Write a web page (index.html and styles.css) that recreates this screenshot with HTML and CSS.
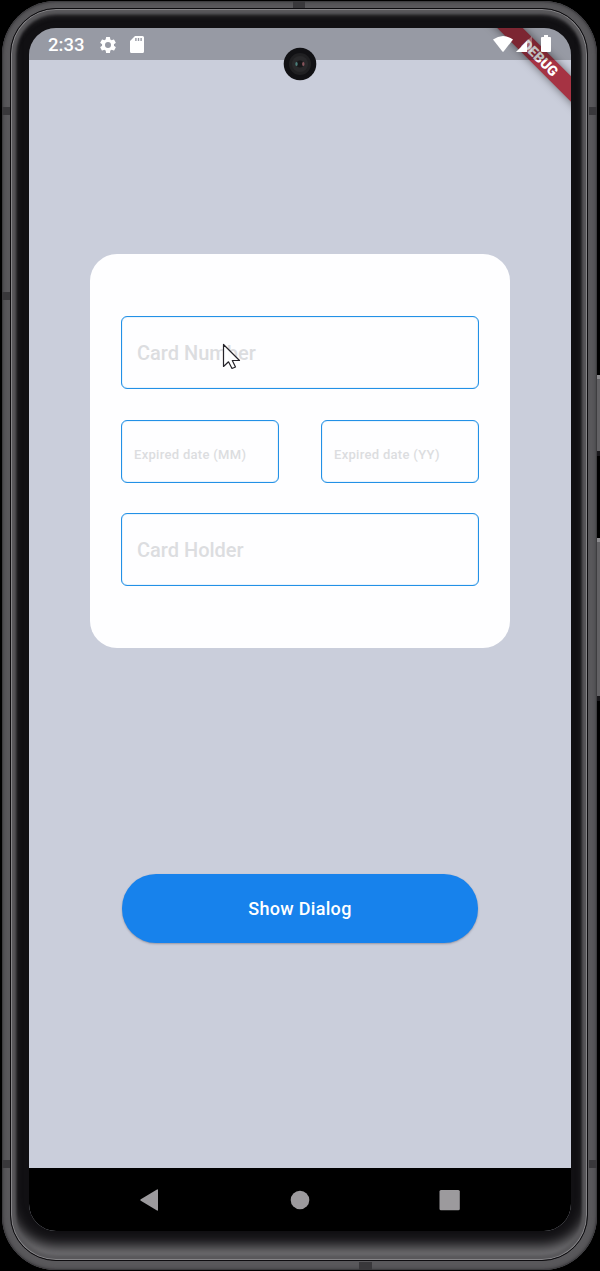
FILE: index.html
```html
<!DOCTYPE html>
<html lang="en">
<head>
<meta charset="utf-8">
<title>Card form</title>
<link rel="stylesheet" href="styles.css">
</head>
<body>
<div class="phone">
  <i class="key key-power"></i>
  <i class="key key-volume"></i>
  <div class="rim">
    <i class="seam seam-top"></i><i class="seam seam-bottom"></i>
    <i class="seam seam-side l1"></i><i class="seam seam-side l2"></i><i class="seam seam-side l3"></i>
    <i class="seam seam-side r1"></i><i class="seam seam-side r3"></i>
    <div class="bezel">
      <div class="screen">
        <div class="ribbon"><span>DEBUG</span></div>
        <header class="status">
          <span class="time">2:33</span>
          <svg class="gear" viewBox="0 0 24 24"><path d="M19.14 12.94c.04-.3.06-.61.06-.94 0-.32-.02-.64-.07-.94l2.03-1.58a.49.49 0 0 0 .12-.61l-1.92-3.32a.49.49 0 0 0-.59-.22l-2.39.96a7 7 0 0 0-1.62-.94L14.4 2.81A.48.48 0 0 0 13.92 2.4h-3.84a.47.47 0 0 0-.47.41L9.25 5.35c-.59.24-1.13.57-1.62.94l-2.39-.96a.48.48 0 0 0-.59.22L2.74 8.87a.47.47 0 0 0 .12.61l2.03 1.58a7 7 0 0 0 0 1.88l-2.03 1.58a.49.49 0 0 0-.12.61l1.92 3.32c.12.22.37.29.59.22l2.39-.96c.5.38 1.03.7 1.62.94l.36 2.54c.05.24.24.41.48.41h3.84c.24 0 .44-.17.47-.41l.36-2.54a7 7 0 0 0 1.62-.94l2.39.96c.22.08.47 0 .59-.22l1.92-3.32a.47.47 0 0 0-.12-.61zM12 15.6a3.6 3.6 0 1 1 0-7.2 3.6 3.6 0 0 1 0 7.2z"/></svg>
          <svg class="sd" viewBox="0 0 14 17"><path fill-rule="evenodd" d="M5 0h7.5A1.5 1.5 0 0 1 14 1.500V15.500A1.500 1.500 0 0 1 12.500 17H1.500A1.500 1.500 0 0 1 0 15.500V5zM5.200 2v3h1.400V2zM7.800 2v3h1.400V2zM10.400 2v3h1.400V2z"/></svg>
          <svg class="wifi" viewBox="0 0 20 16"><path d="M0 3.500Q10-3.500 20 3.500L10.600 15.500Q10 16 9.400 15.500Z"/></svg>
          <svg class="signal" viewBox="0 0 16 16"><path opacity=".3" d="M16 0V16H0Z"/><path d="M11 5V16H0Z"/></svg>
          <svg class="battery" viewBox="0 0 10 17"><path d="M3 0h4v2h2q1 0 1 1v13q0 1-1 1H1q-1 0-1-1V3q0-1 1-1h2z"/></svg>
        </header>
        <svg class="camera" viewBox="0 0 34 34"><circle cx="17" cy="17" r="16.300" fill="#111114"/><circle cx="17" cy="17" r="11" fill="#202022"/><circle cx="17" cy="17" r="8" fill="#29292b"/><circle cx="17" cy="17" r="3.500" fill="#171719"/><ellipse cx="13.500" cy="17" rx="1.200" ry="2" fill="#4c7d79"/><ellipse cx="20.300" cy="17" rx="1.200" ry="2" fill="#87555c"/></svg>
        <main class="content">
          <form class="card">
            <div class="field">Card Number</div>
            <div class="dates">
              <div class="field small">Expired date (MM)</div>
              <div class="field small">Expired date (YY)</div>
            </div>
            <div class="field">Card Holder</div>
          </form>
          <button class="show" type="button">Show Dialog</button>
        </main>
        <svg class="pointer" viewBox="0 0 20 28"><path d="M1.500 1.500V23.500L6.500 18.800 10 25.500 13.500 24 10.300 17.500H17.500Z" fill="#fff" fill-opacity=".9" stroke="#252329" stroke-width="1.200" stroke-linejoin="round"/></svg>
        <nav class="nav">
          <svg viewBox="0 0 24 24"><path d="M2.800 11.200 19 1.500q1-.6 1 .5v20q0 1-1 .5L2.800 12.800q-1.300-.8 0-1.600Z"/></svg>
          <svg viewBox="0 0 24 24"><circle cx="12" cy="12" r="9.300"/></svg>
          <svg viewBox="0 0 24 24"><rect x="1.500" y="2" width="20.300" height="20.300" rx="1.500"/></svg>
        </nav>
      </div>
    </div>
  </div>
</div>
</body>
</html>
```
FILE: styles.css
```css
* { box-sizing: border-box; }
body { margin: 0; background: #000; font-family: Roboto, sans-serif; }
.phone { position: relative; width: 600px; height: 1271px; padding: 1px 3px 1px 2px; overflow: hidden; }
.rim {
  position: relative; height: 100%; padding: 7px 9px 9px 8px; border-radius: 54px;
  background: #59585b;
  box-shadow: inset 0 0 0 1px #3e3d40, inset 0 0 3px 2px #48474a;
}
.bezel {
  position: relative; height: 100%; padding: 19px 14px 28px 18px;
  border: 1px solid #0d0c0f; border-radius: 46px;
  background: #111013;
  box-shadow: inset 0 0 0 1px #858487, inset 0 0 3px 5px #59585b, inset 0 5px 6px 0 #4c4b4e, inset 0 -17px 13px -3px #747376;
}
.screen {
  position: relative; display: flex; flex-direction: column;
  width: 542px; height: 1203px; border-radius: 27px; overflow: hidden;
  background: #cacedb;
}
.status {
  position: relative; flex: none; display: flex; align-items: center;
  height: 32px; padding: 1px 20px 0 19px; color: #fff;
  background: rgba(0, 0, 0, .25);
}
.status svg { fill: #fff; }
.time { font-size: 18.500px; font-weight: 500; width: 49px; }
.gear { width: 20px; height: 20px; margin-left: 1px; }
.sd { width: 14px; height: 17px; margin-left: 12px; }
.wifi { width: 20px; height: 16px; margin-left: auto; margin-top: -2px; }
.signal { width: 16px; height: 16px; margin: -1px 9px 0 3px; }
.battery { width: 10px; height: 17px; margin-top: -2px; }
.ribbon {
  position: absolute; left: 411px; top: 21px; width: 200px; height: 18px;
  display: flex; align-items: center; justify-content: center;
  transform: rotate(45deg);
  background: #a63343; color: #fff; font-size: 14px; font-weight: 900;
  box-shadow: 0 0 8px rgba(0, 0, 0, .5);
}
.camera { position: absolute; left: 254px; top: 19px; width: 34px; height: 34px; }
.content { flex: 1; display: flex; flex-direction: column; align-items: center; padding-top: 194px; }
.card {
  width: 420px; height: 394px; padding: 62px 31px; border-radius: 27px; background: #fefeff;
  display: flex; flex-direction: column; justify-content: space-between;
}
.field {
  height: 73px; padding: 0 15px; border: 1px solid #2391e6; border-radius: 6px;
  box-shadow: inset 0 0 1px #3a9de6;
  display: flex; align-items: center;
  color: #dcdde0; font-size: 20px; font-weight: 500;
}
.dates { display: grid; grid-template-columns: 158px 158px; justify-content: space-between; }
.field.small { height: 63px; padding: 6px 12px 0; font-size: 13px; letter-spacing: .3px; }
.show {
  width: 356px; height: 69px; margin-top: 226px; border: 0; border-radius: 34px;
  background: #1782ec; color: #fff; font: 500 18px Roboto, sans-serif; letter-spacing: .3px;
  box-shadow: 0 1px 2px rgba(80, 70, 80, .4);
}
.pointer { position: absolute; left: 193px; top: 315px; width: 20px; height: 28px; }
.nav { flex: none; display: flex; justify-content: center; gap: 126px; height: 63px; align-items: center; background: #000; }
.nav svg { width: 24px; height: 24px; fill: #9c9a9d; }
.key { position: absolute; right: 0; width: 5px; background: #626164; border-top: 4px solid #8c8b8e; border-bottom: 5px solid #19181b; }
.key-power { top: 375px; height: 81px; }
.key-volume { top: 538px; height: 163px; }
.seam { position: absolute; background: #39383b; }
.seam-top { left: 291px; top: 0; width: 12px; height: 7px; }
.seam-bottom { left: 357px; bottom: 0; width: 13px; height: 8px; }
.seam-side { width: 8px; height: 8px; }
.l1, .l2, .l3 { left: 0; }
.r1, .r3 { right: 0; }
.l1, .r1 { top: 106px; }
.l2 { top: 291px; }
.l3, .r3 { top: 1159px; }
```
